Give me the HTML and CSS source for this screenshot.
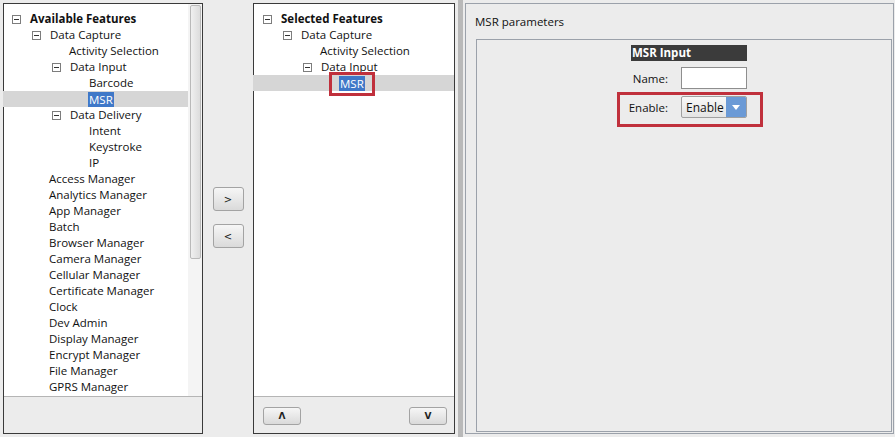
FILE: index.html
```html
<!DOCTYPE html>
<html>
<head>
<meta charset="utf-8">
<link rel="stylesheet" href="styles.css">
</head>
<body>
<div class="page">
  <div class="panel left">
    <div class="tree-wrap">
      <div class="tree">
        <div class="row l0"><span class="exp"></span><b>Available Features</b></div>
        <div class="row l1"><span class="exp"></span>Data Capture</div>
        <div class="row l2 leaf"><span class="sp"></span>Activity Selection</div>
        <div class="row l2"><span class="exp"></span>Data Input</div>
        <div class="row l3 leaf"><span class="sp"></span>Barcode</div>
        <div class="row l3 leaf sel"><span class="sp"></span><span class="hl">MSR</span></div>
        <div class="row l2"><span class="exp"></span>Data Delivery</div>
        <div class="row l3 leaf"><span class="sp"></span>Intent</div>
        <div class="row l3 leaf"><span class="sp"></span>Keystroke</div>
        <div class="row l3 leaf"><span class="sp"></span>IP</div>
        <div class="row l1 leaf"><span class="sp"></span>Access Manager</div>
        <div class="row l1 leaf"><span class="sp"></span>Analytics Manager</div>
        <div class="row l1 leaf"><span class="sp"></span>App Manager</div>
        <div class="row l1 leaf"><span class="sp"></span>Batch</div>
        <div class="row l1 leaf"><span class="sp"></span>Browser Manager</div>
        <div class="row l1 leaf"><span class="sp"></span>Camera Manager</div>
        <div class="row l1 leaf"><span class="sp"></span>Cellular Manager</div>
        <div class="row l1 leaf"><span class="sp"></span>Certificate Manager</div>
        <div class="row l1 leaf"><span class="sp"></span>Clock</div>
        <div class="row l1 leaf"><span class="sp"></span>Dev Admin</div>
        <div class="row l1 leaf"><span class="sp"></span>Display Manager</div>
        <div class="row l1 leaf"><span class="sp"></span>Encrypt Manager</div>
        <div class="row l1 leaf"><span class="sp"></span>File Manager</div>
        <div class="row l1 leaf"><span class="sp"></span>GPRS Manager</div>
      </div>
      <div class="scrollbar"><div class="thumb"></div></div>
    </div>
    <div class="panel-foot"></div>
  </div>

  <div class="mover">
    <button class="btn sq">&gt;</button>
    <button class="btn sq">&lt;</button>
  </div>

  <div class="panel middle">
    <div class="tree-wrap">
      <div class="tree">
        <div class="row l0 m"><span class="exp"></span><b>Selected Features</b></div>
        <div class="row l1 m"><span class="exp"></span>Data Capture</div>
        <div class="row l2 m leaf"><span class="sp"></span>Activity Selection</div>
        <div class="row l2 m"><span class="exp"></span>Data Input</div>
        <div class="row l3 m leaf sel"><span class="sp"></span><span class="hl mark">MSR</span></div>
      </div>
    </div>
    <div class="panel-foot foot-btns">
      <button class="btn wide">&#923;</button>
      <button class="btn wide">V</button>
    </div>
  </div>

  <div class="splitter"></div>

  <div class="params">
    <div class="params-title">MSR parameters</div>
    <div class="params-body">
      <div class="form">
        <div class="form-head">MSR Input</div>
        <label class="lbl">Name:</label>
        <div class="input"></div>
        <div class="enable-row">
          <label class="lbl">Enable:</label>
          <div class="select"><span class="sel-text">Enable</span><span class="sel-arrow"></span></div>
          <div class="annot"></div>
        </div>
      </div>
    </div>
  </div>
</div>
</body>
</html>
```

FILE: styles.css
```css
* { box-sizing: border-box; }
html, body { margin: 0; padding: 0; }
body {
  background: #ececec;
  font-family: "Open Sans", "Noto Sans", sans-serif;
  font-size: 11.5px;
  color: #111;
  width: 895px;
  height: 437px;
  overflow: hidden;
}
.page {
  display: flex;
  padding: 3px 1px 3px 3px;
  height: 437px;
}
.panel {
  border: 1px solid #3a3a3a;
  display: flex;
  flex-direction: column;
  background: #ececec;
}
.left { width: 200px; }
.middle { width: 202px; }
.tree-wrap {
  height: 393px;
  background: #fff;
  display: flex;
  border-bottom: 1px solid #b5b5b5;
}
.tree {
  flex: 1;
  padding-top: 7px;
  min-width: 0;
}
.row {
  height: 16px;
  line-height: 16px;
  display: flex;
  align-items: center;
  white-space: nowrap;
}
.row b { font-weight: 700; }
.l0 { padding-left: 8px; }
.l1 { padding-left: 28px; }
.l2 { padding-left: 48px; }
.l3 { padding-left: 68px; }
.leaf { margin-left: -1px; }
.l0.m { padding-left: 9px; }
.l1.m { padding-left: 29px; }
.l2.m { padding-left: 49px; }
.l3.m { padding-left: 69px; }
.exp {
  width: 9px;
  height: 9px;
  border: 1px solid #7d7d7d;
  margin-right: 9px;
  position: relative;
  flex: none;
}
.exp::after {
  content: "";
  position: absolute;
  left: 1px;
  right: 1px;
  top: 3px;
  height: 1px;
  background: #333;
}
.sp { width: 18px; flex: none; }
.sel { background: #d6d6d6; }
.hl {
  background: #3f78c8;
  color: #fff;
  padding: 0 1px;
  line-height: 15px;
  margin-left: -1px;
  position: relative;
}
.mark::after {
  content: "";
  position: absolute;
  left: -10px;
  right: -10px;
  top: -4px;
  bottom: -5px;
  border: 3px solid #c0303c;
}
.scrollbar {
  width: 14px;
  background: #f4f4f4;
  padding: 1px 1px 0 2px;
  flex: none;
}
.thumb {
  height: 254px;
  border: 1px solid #b9b9b9;
  border-radius: 2px;
  background: linear-gradient(to right, #f0f0f0, #dcdcdc);
}
.panel-foot { flex: 1; }
.foot-btns {
  display: flex;
  justify-content: space-between;
  padding: 10px 7px 0 9px;
  align-items: flex-start;
}
.btn {
  font-family: "DejaVu Sans", sans-serif;
  border: 1px solid #a3a3a3;
  border-radius: 3px;
  background: linear-gradient(to bottom, #f6f6f6, #dadada);
  color: #222;
  padding: 0;
  margin: 0;
}
.sq {
  width: 31px;
  height: 24px;
  font-size: 10px;
}
.wide {
  width: 38px;
  height: 18px;
  font-size: 9px;
  font-weight: bold;
  line-height: 16px;
}
.mover {
  width: 50px;
  display: flex;
  flex-direction: column;
  align-items: center;
  padding-top: 184px;
  gap: 13px;
}
.splitter {
  width: 10px;
  display: flex;
  justify-content: center;
  padding-left: 1px;
}
.splitter::before {
  content: "";
  width: 5px;
  margin-top: -3px;
  margin-bottom: -3px;
  background-image: radial-gradient(circle, #9a9a9a 0.6px, transparent 0.9px);
  background-size: 2px 2px;
  background-color: #f2f2f2;
}
.params {
  flex: 1;
  border: 1px solid #9ba1aa;
  display: flex;
  flex-direction: column;
}
.params-title {
  height: 35px;
  padding: 10px 0 0 9px;
  font-size: 11.5px;
}
.params-body {
  flex: 1;
  margin: 0 1px 1px 10px;
  border: 1px solid #9ba1aa;
  padding: 5px 0 0 10px;
  display: flex;
  justify-content: center;
}
.form {
  display: grid;
  grid-template-columns: 37px 66px;
  column-gap: 13px;
  align-content: start;
  align-items: center;
}
.form-head {
  grid-column: 1 / 3;
  background: #3b3b3b;
  color: #fff;
  font-weight: 700;
  height: 16px;
  line-height: 16px;
  padding-left: 1px;
  margin-bottom: 6px;
}
.lbl {
  text-align: right;
  white-space: nowrap;
  justify-self: end;
}
.input {
  height: 22px;
  background: #fff;
  border: 1px solid #8e8e8e;
}
.enable-row {
  grid-column: 1 / 3;
  display: grid;
  grid-template-columns: 37px 66px;
  column-gap: 13px;
  align-items: center;
  margin-top: 7px;
  position: relative;
}
.select {
  height: 22px;
  border: 1px solid #a0a0a0;
  border-radius: 2px;
  background: linear-gradient(to bottom, #f8f8f8, #e4e4e4);
  display: flex;
  align-items: center;
  overflow: hidden;
}
.sel-text {
  flex: 1;
  padding-left: 4px;
  font-size: 12px;
}
.sel-arrow {
  width: 20px;
  height: 100%;
  background: #6b9ad6;
  position: relative;
}
.sel-arrow::after {
  content: "";
  position: absolute;
  left: 6px;
  top: 8px;
  border-left: 4px solid transparent;
  border-right: 4px solid transparent;
  border-top: 5px solid #fff;
}
.annot {
  position: absolute;
  left: -14px;
  right: -16px;
  top: -4px;
  bottom: -9px;
  border: 3px solid #c0303c;
}
```
